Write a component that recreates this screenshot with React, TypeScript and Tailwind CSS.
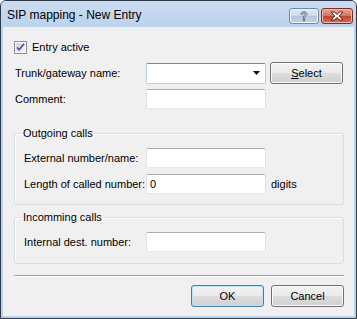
import type { ReactNode } from "react";

const fieldBox =
  "h-[20px] w-[120px] rounded-[2px] border border-t-[#abadb3] border-l-[#e2e3ea] border-r-[#dbdfe6] border-b-[#e3e9ef] bg-white px-[3px] flex items-center";

function TextBox({ value }: { value?: string }) {
  return <div className={fieldBox}>{value}</div>;
}

function Dropdown() {
  return (
    <div className="flex h-[21px] w-[120px] items-center justify-end rounded-[2px] border border-t-[#5b8ec4] border-l-[#b5cfe7] border-r-[#b5cfe7] border-b-[#b5cfe7] bg-white pr-[5px]">
      <svg width="7" height="4" viewBox="0 0 7 4" aria-hidden="true">
        <path d="M0 0h7L3.5 4z" fill="#111" />
      </svg>
    </div>
  );
}

function WinButton({ children, primary }: { children: ReactNode; primary?: boolean }) {
  return (
    <button
      className={
        "h-[22px] w-[73px] rounded-[3px] border bg-[linear-gradient(#f2f2f2,#ebebeb_48%,#dddddd_52%,#cfcfcf)] text-[11px] text-black " +
        (primary
          ? "border-[#3c7fb1] shadow-[inset_0_0_0_1px_#bde4f7]"
          : "border-[#707070] shadow-[inset_0_0_0_1px_#fbfbfb]")
      }
    >
      {children}
    </button>
  );
}

function Row({ label, children, width = "w-[132px] pl-[1px]" }: { label: string; children: ReactNode; width?: string }) {
  return (
    <div className="flex items-center">
      <span className={width}>{label}</span>
      {children}
    </div>
  );
}

function Group({ title, children, className }: { title: string; children: ReactNode; className: string }) {
  return (
    <fieldset
      className={
        "w-[330px] rounded-[3px] border border-[#d5dfe5] pl-[9px] shadow-[inset_1px_1px_0_#fff] " + className
      }
    >
      <legend className="-ml-[2px] h-[13px] px-[1px] leading-[13px]">{title}</legend>
      {children}
    </fieldset>
  );
}

export default function App() {
  return (
    <div className="flex h-[319px] w-[357px] flex-col rounded-t-[6px] border border-[#2e3a47] bg-[#b9d1ea] font-['Liberation_Sans',Arial,sans-serif] text-[11px] text-black">
      {/* title bar */}
      <div className="flex h-[26px] shrink-0 items-start rounded-t-[5px] bg-[linear-gradient(#cadcf1,#bcd3ec)] pl-[6px] pr-[3px]">
        <span className="mt-[7px] text-[12px] leading-[14px] text-black">SIP mapping - New Entry</span>
        <div className="ml-auto mt-[7px] flex gap-[2px]">
          <div className="flex h-[16px] w-[30px] items-center justify-center rounded-[3px] border border-[#6e88a8] bg-[linear-gradient(#e4ecf6,#c8d7ea_50%,#b3c7e0_52%,#c3d4ea)] shadow-[inset_0_0_0_1px_#eef3fa]">
            <svg width="8" height="11" viewBox="0 0 8 11" aria-hidden="true">
              <path
                d="M1 3.2C1 1.6 2.3.8 4 .8S7 1.7 7 3c0 1.3-1 1.8-1.8 2.3-.6.4-.7.7-.7 1.4H3.2c0-1.2.3-1.700 1.1-2.2.7-.5 1.2-.8 1.2-1.5 0-.6-.6-1-1.4-1-.9 0-1.4.5-1.4 1.2zM3.2 8h1.4v1.8H3.2z"
                fill="#fff"
                stroke="#3c4a5c"
                strokeWidth="0.8"
              />
            </svg>
          </div>
          <div className="flex h-[16px] w-[32px] items-center justify-center rounded-[3px] border border-[#7a2e24] bg-[linear-gradient(#e8a597,#d8735f_48%,#c4432d_52%,#d4705c)] shadow-[inset_0_0_0_1px_#efb8ad]">
            <svg width="14" height="10" viewBox="0 0 14 10" aria-hidden="true">
              <path
                d="M1 1h3.2L7 3.4 9.8 1H13L9.2 5 13 9H9.8L7 6.6 4.2 9H1l3.8-4z"
                fill="#fff"
                stroke="#4b1c16"
                strokeWidth="0.9"
                strokeLinejoin="round"
              />
            </svg>
          </div>
        </div>
      </div>

      {/* client area */}
      <div className="mx-[2px] mb-[2px] flex flex-1 flex-col bg-[#f0f0f0] pl-[11px] pt-[14px]">
        <div className="flex h-[13px] items-center gap-[5px]">
          <svg width="13" height="13" viewBox="0 0 13 13" aria-hidden="true">
            <defs>
              <linearGradient id="cb" x1="0" y1="0" x2="1" y2="1">
                <stop offset="0" stopColor="#cbcfd5" />
                <stop offset="1" stopColor="#f6f6f6" />
              </linearGradient>
            </defs>
            <rect x="0.5" y="0.5" width="12" height="12" fill="#fff" stroke="#8e8f8f" />
            <rect x="2" y="2" width="9" height="9" fill="url(#cb)" stroke="#f4f4f4" strokeWidth="0.5" />
            <path d="M3 6.4l2.2 2.3L10 2.8" fill="none" stroke="#4a5f97" strokeWidth="1.8" />
          </svg>
          <span>Entry active</span>
        </div>

        <div className="mt-[8px] flex items-center">
          <span className="w-[132px] pl-[1px]">Trunk/gateway name:</span>
          <Dropdown />
          <div className="ml-[4px]">
            <WinButton>
              <span className="underline underline-offset-[1px]">S</span>elect
            </WinButton>
          </div>
        </div>

        <div className="mt-[5px]">
          <Row label="Comment:">
            <TextBox />
          </Row>
        </div>

        <Group title="Outgoing calls" className="mt-[18px] pb-[10px] pt-[8px]">
          <div className="flex flex-col gap-[6px]">
            <Row label="External number/name:" width="w-[122px]">
              <TextBox />
            </Row>
            <Row label="Length of called number:" width="w-[122px]">
              <TextBox value="0" />
              <span className="ml-[5px]">digits</span>
            </Row>
          </div>
        </Group>

        <Group title="Incomming calls" className="mt-[6px] pb-[11px] pt-[8px]">
          <Row label="Internal dest. number:" width="w-[122px]">
            <TextBox />
          </Row>
        </Group>

        <div className="mt-[11px] h-[2px] w-[330px] border-t border-b border-t-[#a0a0a0] border-b-white" />

        <div className="mt-[8px] flex w-[330px] justify-end gap-[7px]">
          <WinButton primary>OK</WinButton>
          <WinButton>Cancel</WinButton>
        </div>
      </div>
    </div>
  );
}
